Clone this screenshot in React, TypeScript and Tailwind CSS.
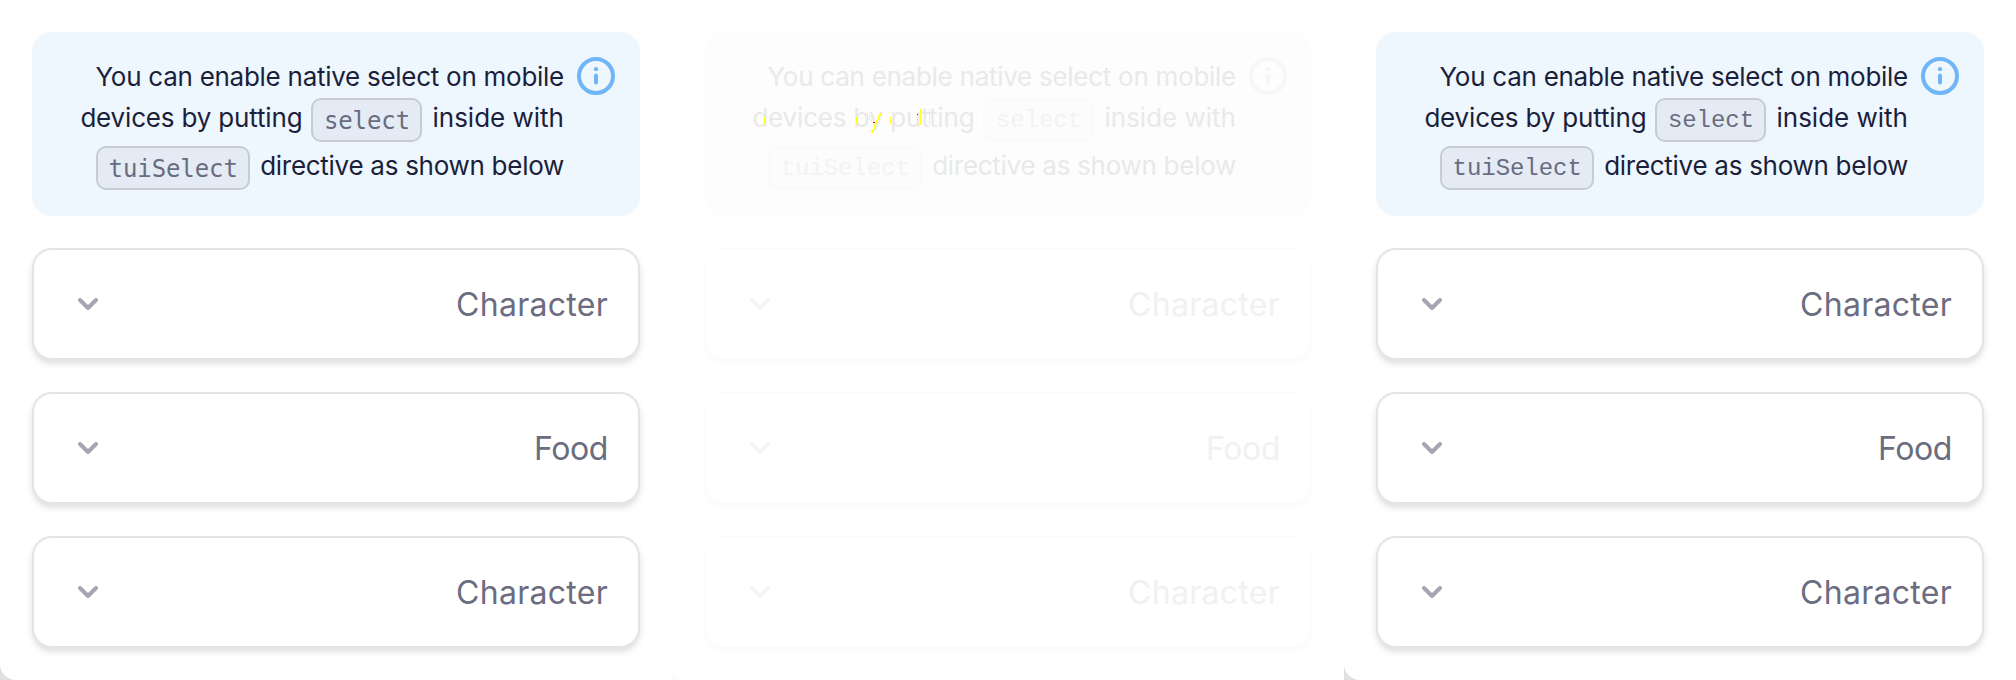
import React from "react";

type Tone = "normal" | "diff";

function Code({ text, box, tone, slab }: { text: string; box: string; tone: Tone; slab: boolean }) {
  const diff = tone === "diff";
  const face = slab
    ? "font-['Liberation_Mono',monospace] text-[24px] tracking-[-0.05px] pt-[2px]"
    : "font-['DejaVu_Sans_Mono',monospace] text-[24px] tracking-[-0.1px] pt-px";
  const colors = diff ? "border-[#fafafa] bg-[#fcfcfc] text-[#f3f3f3]" : "border-[#c6ccd4] bg-[#e4ebf4] text-[#696c80]";
  return (
    <code className={`flex h-[44px] shrink-0 items-center justify-center rounded-[10px] border-2 leading-[40px] ${box} ${face} ${colors}`}>
      {text}
    </code>
  );
}

const fields = [
  { label: "Character", tracking: "tracking-[0.28px]" },
  { label: "Food", tracking: "tracking-[-0.4px]" },
  { label: "Character", tracking: "tracking-[0.28px]" },
];

function Panel({ tone, slab }: { tone: Tone; slab: boolean }) {
  const diff = tone === "diff";
  const ring = diff ? "#f6f6f6" : "#70b6f6";
  return (
    <div className={`h-[680px] w-[672px] shrink-0 ${diff ? "bg-[#fcfcfc]" : "bg-[#e0e0e0]"}`}>
      <section className="flex h-full flex-col gap-8 rounded-bl-[16px] bg-white px-8 pt-8">
        <div className={`flex h-[184px] shrink-0 rounded-[20px] ${diff ? "bg-[#fdfdfd]" : "bg-[#eef6fe]"}`}>
          <div className={`flex w-[532px] shrink-0 flex-col items-end pt-6 text-[26px] leading-[40px] whitespace-nowrap ${diff ? "text-[#e9e9e9]" : "text-[#1b1f3b]"}`}>
            <div className="h-[42px] pt-px tracking-[-0.27px]">You can enable native select on mobile</div>
            <div className="flex h-[48px]">
              <span className="tracking-[-0.17px]">devices by putting</span>
              <Code text="select" box="ml-[9px] mr-[10px] w-[111px]" tone={tone} slab={slab} />
              <span>inside with</span>
            </div>
            <div className="flex">
              <Code text="tuiSelect" box="mr-[10px] w-[154px]" tone={tone} slab={slab} />
              <span className="tracking-[-0.28px]">directive as shown below</span>
            </div>
          </div>
          <svg className="mt-6 ml-[12px] shrink-0" width="40" height="40" viewBox="0 0 40 40" fill="none">
            <circle cx="20" cy="20" r="17" stroke={ring} strokeWidth="4" />
            <circle cx="20" cy="13.2" r="2.1" fill={ring} />
            <path d="M20 19.6v7" stroke={ring} strokeWidth="4" strokeLinecap="round" />
          </svg>
        </div>
        {fields.map(({ label, tracking }, i) => (
          <button
            key={i}
            className={`flex h-[112px] shrink-0 items-center justify-between rounded-[20px] border-2 bg-white pr-[30px] pl-[34px] text-[32px] leading-[40px] ${diff ? "border-[#fcfcfc] text-[#f1f1f1] shadow-[0_4px_6px_#fcfcfc]" : "border-[#e4e4e4] text-[#6c6c80] shadow-[0_4px_6px_rgba(0,0,0,0.12)]"}`}
          >
            <svg width="40" height="40" viewBox="0 0 40 40" fill="none">
              <path d="M12 16l8 8 8-8" stroke={diff ? "#f5f5f5" : "#a4a5b1"} strokeWidth="4" strokeLinecap="round" strokeLinejoin="round" />
            </svg>
            <span className={`pt-[2px] ${tracking}`}>{label}</span>
          </button>
        ))}
      </section>
    </div>
  );
}

// Changed pixels flagged over the comparison text
function DiffMarks() {
  return (
    <svg className="absolute top-[104px] left-[752px]" width="190" height="32" viewBox="752 104 190 32" shapeRendering="crispEdges">
      <path
        stroke="#ffff2a"
        strokeWidth="1"
        fill="none"
        d="M764.5 117v7M856.5 117v7M890.5 117v7M920.5 109v16M929.5 109v15M867.5 113v3M869.5 115v5M871.5 119v3M880.5 113v3M878.5 115v5M876.5 120v4M874.5 124v5M872.5 129v4"
      />
      <path fill="#f00" d="M873 122h2v1h-2zM917 114h1v1h-1z" />
    </svg>
  );
}

export default function App() {
  return (
    <main className="relative flex h-[680px] w-[2016px] overflow-hidden bg-white font-['Inter','Open_Sans',sans-serif]">
      <Panel tone="normal" slab={false} />
      <Panel tone="diff" slab={true} />
      <Panel tone="normal" slab={true} />
      <DiffMarks />
    </main>
  );
}
